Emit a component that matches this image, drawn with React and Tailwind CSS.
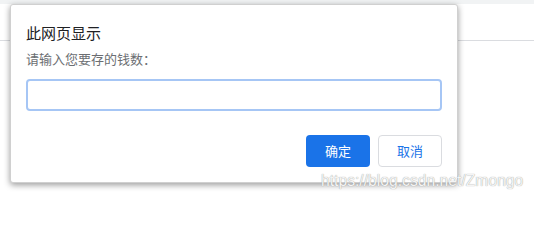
import { useState } from "react";

function PromptDialog() {
  const [amount, setAmount] = useState("");

  return (
    <div className="absolute left-[10px] top-[4px] w-[448px] rounded-[3px] border border-[#d0d0d0] bg-white px-[15px] pt-[19px] pb-[15px] shadow-[0_2px_6px_rgba(0,0,0,0.4)]">
      <div className="text-[15px] leading-[18px] text-[#202124]">此网页显示</div>
      <div className="mt-[9px] text-[13px] leading-[16px] text-[#6b6e72]">请输入您要存的钱数：</div>
      <input
        className="mt-[12px] block h-[32px] w-[416px] rounded-[4px] border-2 border-[#a6c6f5] px-2 text-[13px] outline-none"
        type="text"
        value={amount}
        onChange={(e) => setAmount(e.target.value)}
      />
      <div className="mt-[24px] flex justify-end gap-[8px]">
        <button className="h-[32px] w-[64px] rounded-[4px] bg-[#1a73e8] text-[13px] text-white">确定</button>
        <button className="h-[32px] w-[64px] rounded-[4px] border border-[#dadce0] bg-white text-[13px] text-[#1a73e8]">取消</button>
      </div>
    </div>
  );
}

export default function App() {
  return (
    <div className="relative h-[200px] w-[534px] overflow-hidden bg-white font-['Noto_Sans_CJK_SC','Noto_Sans',sans-serif]">
      <div className="h-[4px] bg-[#f1f3f4]"></div>
      <div className="mt-[36px] h-px bg-[#dadce0]"></div>
      <PromptDialog />
      {/* csdn watermark */}
      <div className="absolute left-[321px] top-[171px] font-['Liberation_Sans',sans-serif] text-[15.7px] leading-[19px] text-[#f4f4f4] [text-shadow:0_0_1px_#8a8a8a]">
        https://blog.csdn.net/Zmongo
      </div>
    </div>
  );
}
